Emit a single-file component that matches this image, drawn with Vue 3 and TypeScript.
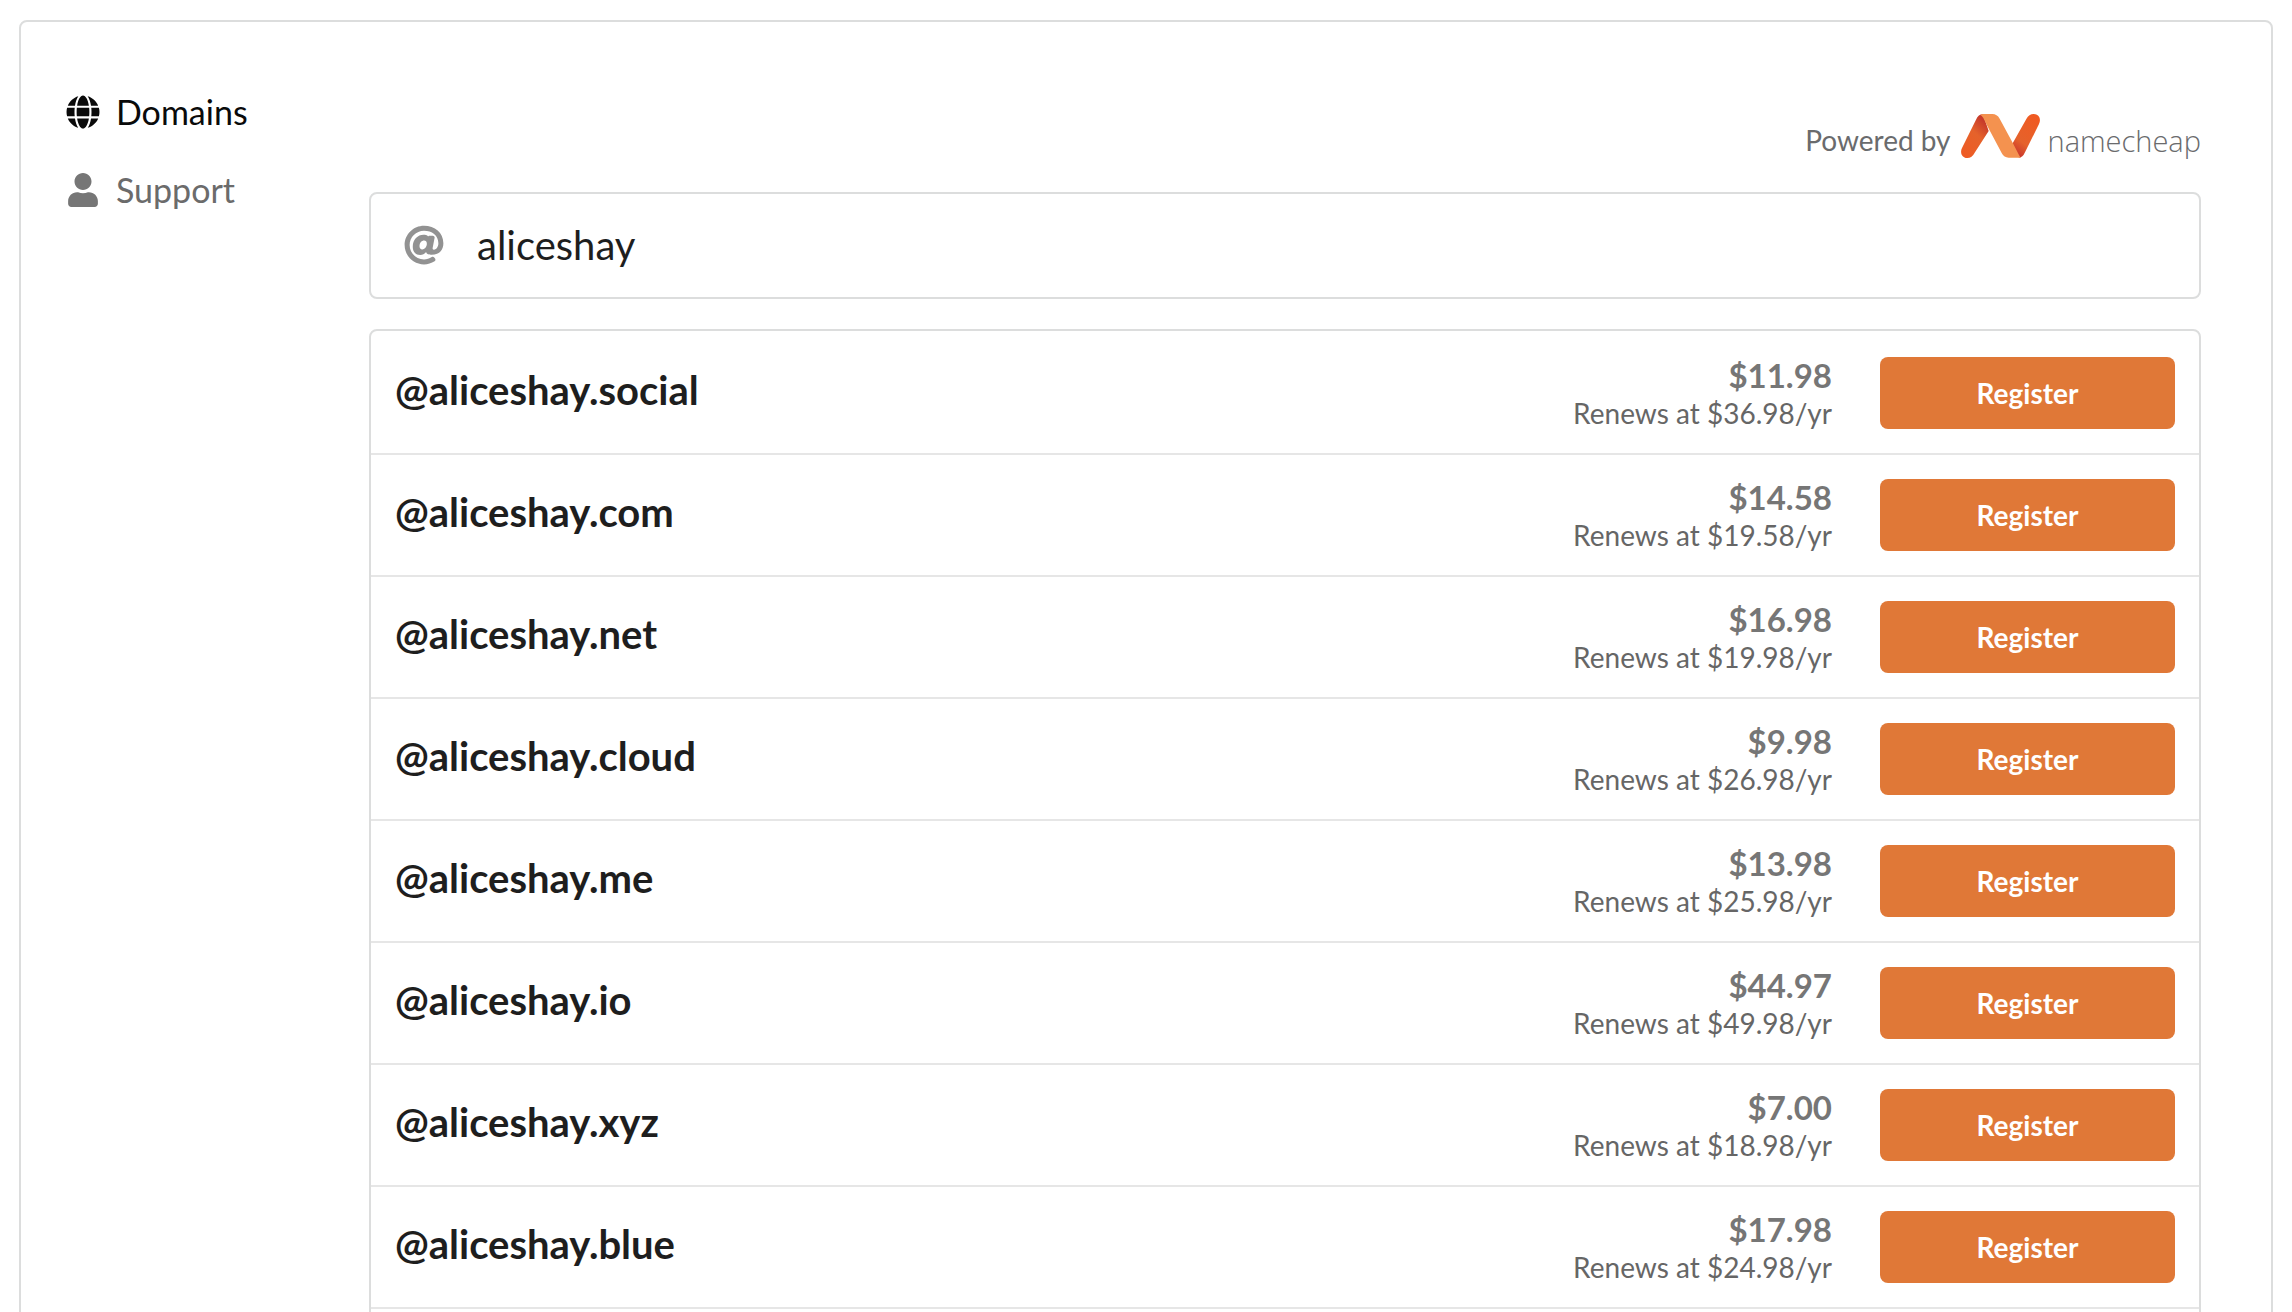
<script setup lang="ts">
import { ref } from 'vue'

interface Offer {
  tld: string
  price: string
  renewal: string
}

const handle = ref('aliceshay')

const offers: Offer[] = [
  { tld: 'social', price: '$11.98', renewal: '$36.98' },
  { tld: 'com', price: '$14.58', renewal: '$19.58' },
  { tld: 'net', price: '$16.98', renewal: '$19.98' },
  { tld: 'cloud', price: '$9.98', renewal: '$26.98' },
  { tld: 'me', price: '$13.98', renewal: '$25.98' },
  { tld: 'io', price: '$44.97', renewal: '$49.98' },
  { tld: 'xyz', price: '$7.00', renewal: '$18.98' },
  { tld: 'blue', price: '$17.98', renewal: '$24.98' },
]
</script>

<template>
  <div class="page">
    <div class="card">
      <nav class="side">
        <a href="#domains" class="side-link active">
          <svg class="side-icon" viewBox="0 0 496 512" aria-hidden="true">
            <path d="M336.5 160C322 70.7 287.8 8 248 8s-74 62.7-88.5 152h177zM152 256c0 22.2 1.2 43.5 3.3 64h185.3c2.1-20.5 3.3-41.8 3.3-64s-1.2-43.5-3.3-64H155.3c-2.1 20.5-3.3 41.8-3.3 64zm324.7-96c-28.6-67.9-86.5-120.4-158-141.6 24.4 33.8 41.2 84.7 50 141.6h108zM177.2 18.4C105.8 39.6 47.8 92.1 19.3 160h108c8.7-56.9 25.5-107.8 49.9-141.6zM487.4 192H372.7c2.1 21 3.3 42.5 3.3 64s-1.2 43-3.3 64h114.6c5.5-20.5 8.6-41.8 8.6-64s-3.1-43.5-8.5-64zM120 256c0-21.5 1.2-43 3.3-64H8.6C3.2 212.5 0 233.8 0 256s3.2 43.5 8.6 64h114.6c-2-21-3.2-42.5-3.2-64zm39.5 96c14.5 89.3 48.7 152 88.5 152s74-62.7 88.5-152h-177zm159.3 141.6c71.4-21.2 129.4-73.7 158-141.6h-108c-8.8 56.9-25.6 107.8-50 141.6zM19.3 352c28.6 67.9 86.5 120.4 158 141.6-24.4-33.8-41.2-84.7-50-141.6h-108z" />
          </svg>
          Domains
        </a>
        <a href="#support" class="side-link">
          <svg class="side-icon" viewBox="0 0 448 512" aria-hidden="true">
            <path d="M224 256c70.7 0 128-57.3 128-128S294.7 0 224 0 96 57.3 96 128s57.3 128 128 128zm89.6 32h-16.7c-22.2 10.2-46.9 16-72.9 16s-50.6-5.8-72.9-16h-16.7C60.2 288 0 348.2 0 422.4V464c0 26.5 21.5 48 48 48h352c26.5 0 48-21.5 48-48v-41.6c0-74.2-60.2-134.4-134.4-134.4z" />
          </svg>
          Support
        </a>
      </nav>

      <main class="main">
        <div class="powered">
          <span class="powered-text">Powered by</span>
          <svg class="logo" viewBox="62 57 237 132" aria-hidden="true">
            <defs>
              <linearGradient id="strokeLeft" x1="0" y1="1" x2="0.6" y2="0">
                <stop offset="0" stop-color="#f05a22" />
                <stop offset="0.65" stop-color="#e5622b" />
                <stop offset="1" stop-color="#c5392b" />
              </linearGradient>
              <linearGradient id="strokeRight" x1="0.7" y1="0" x2="0.2" y2="1">
                <stop offset="0" stop-color="#f05a22" />
                <stop offset="0.65" stop-color="#e5622b" />
                <stop offset="1" stop-color="#c5302c" />
              </linearGradient>
            </defs>
            <path d="M65 159 L107 74 Q114 58 128 58 L145 108 L103 173 Q95 189 81 189 Q70 189 64 179 Q60 169 65 159 Z" fill="url(#strokeLeft)" />
            <path d="M296 87 L254 172 Q247 188 236 188 L214 150 L258 72 Q266 57 280 57 Q291 57 297 67 Q301 77 296 87 Z" fill="url(#strokeRight)" />
            <path d="M120 60 Q123 57 130 57 H156 Q170 57 178 71 L219 147 L236 180 Q239 187 242 188 H205 Q191 188 184 174 L141 93 L129 69 Q124 61 120 60 Z" fill="#f4924f" />
          </svg>
          <span class="brand">namecheap</span>
        </div>

        <label class="search">
          <svg class="search-icon" viewBox="0 0 512 512" role="img" aria-label="Username">
            <path d="M256 8C118.941 8 8 118.919 8 256c0 137.059 110.919 248 248 248 48.154 0 95.342-14.14 135.408-40.223 12.005-7.815 14.625-24.288 5.552-35.372l-10.177-12.433c-7.671-9.371-21.179-11.667-31.373-5.129C325.92 429.757 291.314 440 256 440c-101.458 0-184-82.542-184-184S154.542 72 256 72c100.139 0 184 57.619 184 160 0 38.786-21.093 79.742-58.17 83.693-17.349-.454-16.91-12.857-13.476-30.024l23.433-121.11C394.653 149.75 383.308 136 368.225 136h-44.981a13.518 13.518 0 0 0-13.432 11.993l-.01.092c-14.697-17.901-40.448-21.775-59.971-21.775-74.58 0-137.831 62.234-137.831 151.46 0 65.303 36.785 105.87 96 105.87 26.984 0 57.369-15.637 74.991-38.333 9.522 34.104 40.613 34.104 70.671 34.104C462.609 379.41 504 307.798 504 232 504 95.653 394.023 8 256 8zm-21.68 304.43c-22.249 0-36.07-15.623-36.07-40.771 0-44.993 30.779-72.729 58.63-72.729 22.292 0 35.601 15.241 35.601 40.77 0 45.061-33.875 72.73-58.161 72.73z" />
          </svg>
          <input v-model="handle" class="search-input" type="text" spellcheck="false" />
        </label>

        <ul class="offers">
          <li v-for="offer in offers" :key="offer.tld" class="offer">
            <span class="name">@{{ handle }}.{{ offer.tld }}</span>
            <div class="cost">
              <div class="price">{{ offer.price }}</div>
              <div class="renewal">Renews at {{ offer.renewal }}/yr</div>
            </div>
            <button type="button" class="register">Register</button>
          </li>
        </ul>
      </main>
    </div>
  </div>
</template>

<style>
body {
  margin: 0;
  background: #fff;
}
</style>

<style scoped>
.page {
  box-sizing: border-box;
  height: 100vh;
  padding: 20px 19px 0;
  overflow: hidden;
  font-family: Lato, 'Liberation Sans', sans-serif;
  color: #1e1e1e;
}

.card {
  display: flex;
  box-sizing: border-box;
  min-height: 110vh;
  padding: 51px 70px 0 45px;
  border: 2px solid #dcdddd;
  border-radius: 8px;
}

.side {
  flex: 0 0 303px;
}

.side-link {
  display: flex;
  align-items: center;
  gap: 16px;
  height: 78px;
  font-size: 34px;
  line-height: 40px;
  color: #6b6b6b;
  text-decoration: none;
}

.side-link.active {
  color: #0a0a0a;
}

.side-icon {
  width: 34px;
  height: 34px;
  fill: #767676;
}

.active .side-icon {
  fill: #0a0a0a;
}

.main {
  flex: 1;
  min-width: 0;
  padding-top: 41px;
}

.powered {
  display: flex;
  align-items: center;
  justify-content: flex-end;
  height: 44px;
  margin-bottom: 34px;
  color: #6a6b6d;
}

.powered-text {
  padding-top: 8px;
  font-size: 28px;
  line-height: 36px;
}

.logo {
  width: 79px;
  height: 44px;
  margin: 0 8px 0 10px;
}

.brand {
  padding-top: 10px;
  font-family: 'Open Sans', Lato, sans-serif;
  font-size: 29px;
  font-weight: 300;
  line-height: 36px;
}

.search {
  display: flex;
  align-items: center;
  box-sizing: border-box;
  height: 107px;
  padding: 0 33px 2px;
  border: 2px solid #dcdddd;
  border-radius: 8px;
}

.search-icon {
  width: 40px;
  height: 40px;
  margin-right: 33px;
  fill: #929292;
}

.search-input {
  flex: 1;
  min-width: 0;
  padding: 0;
  border: 0;
  outline: 0;
  background: transparent;
  font: inherit;
  font-size: 40px;
  line-height: 48px;
  color: inherit;
}

.offers {
  margin: 30px 0 0;
  padding: 2px 0 24px;
  list-style: none;
  border: 2px solid #dcdddd;
  border-radius: 8px;
}

.offer {
  display: flex;
  align-items: center;
  box-sizing: border-box;
  height: 122px;
  padding: 0 24px;
  border-bottom: 2px solid #e6e6e6;
}

.name {
  flex: 1;
  padding-bottom: 6px;
  font-size: 40px;
  font-weight: 700;
  line-height: 48px;
}

.cost {
  margin-right: 48px;
  text-align: right;
}

.price {
  font-size: 33px;
  font-weight: 700;
  line-height: 40px;
  color: #767676;
}

.renewal {
  font-size: 28px;
  line-height: 36px;
  color: #666;
}

.register {
  width: 295px;
  height: 72px;
  padding: 0;
  border: 0;
  border-radius: 8px;
  background: #e07837;
  font: inherit;
  font-size: 28px;
  font-weight: 700;
  line-height: 36px;
  color: #fff;
}
</style>
